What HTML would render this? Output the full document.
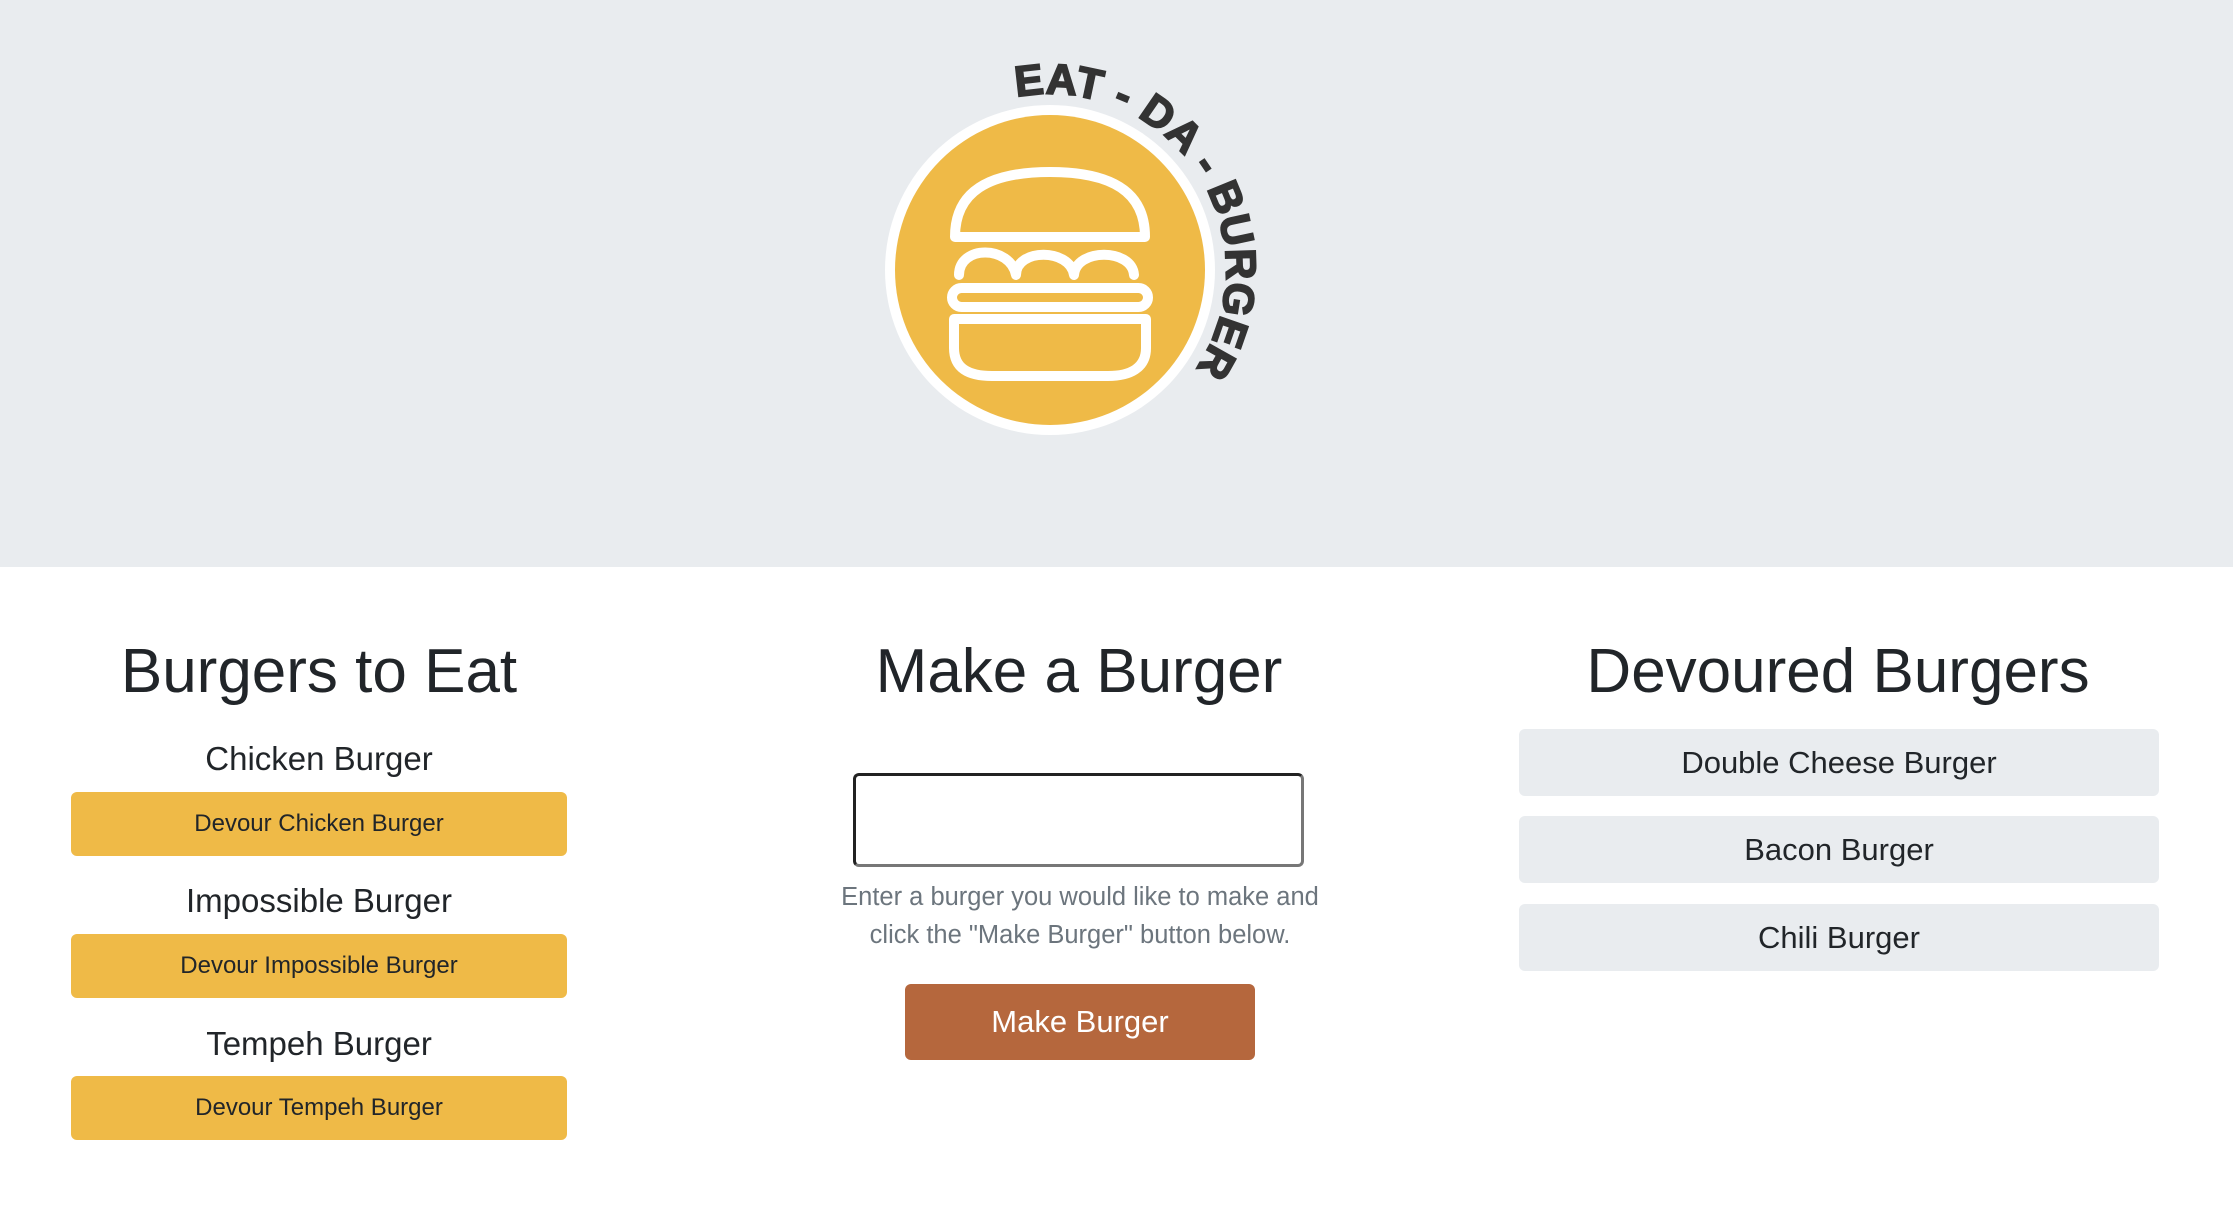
<!DOCTYPE html>
<html><head><meta charset="utf-8"><style>
*{margin:0;padding:0;box-sizing:border-box}
body{width:2233px;height:1222px;background:#fff;font-family:"Liberation Sans",sans-serif;color:#212529;position:relative;overflow:hidden}
.hdr{position:absolute;left:0;top:0;width:2233px;height:567px;background:#e9ecef}
.a{position:absolute;text-align:center}
h1{position:absolute;font-weight:400;font-size:62px;text-align:center;width:700px;line-height:1}
.nm{font-size:33px;width:496px;left:71px;line-height:1}
.yb{position:absolute;left:71px;width:496px;height:64px;background:#efba47;border-radius:6px;font-size:24px;line-height:64px;text-align:center}
.gb{position:absolute;left:1519px;width:640px;height:67px;background:#e9ecef;border-radius:6px;font-size:31px;line-height:67px;text-align:center}
</style></head><body>
<div class="hdr"></div>
<svg style="position:absolute;left:850px;top:60px" width="420" height="420" viewBox="0 0 420 420">
<defs><path id="arc" d="M166.4,37.2 A176,176 0 0 1 340.6,315.9"/></defs>
<circle cx="200" cy="210" r="165" fill="#fff"/>
<circle cx="200" cy="210" r="155" fill="#efba47"/>
<g fill="none" stroke="#fff" stroke-width="10" stroke-linecap="round" stroke-linejoin="round">
<path d="M105,177 L295,177 C295,132 262,112 200,112 C138,112 105,132 105,177 Z"/>
<path d="M109,215 C109,185 160,185 166,215 C166,188 220,188 224,215 C226,188 282,188 284,215"/>
<rect x="102" y="228" width="196" height="19" rx="9.5"/>
<path d="M104,259 L296,259 L296,288 C296,308 280,316 258,316 L142,316 C118,316 104,308 104,288 Z"/>
</g>
<text font-family="Liberation Sans,sans-serif" font-weight="bold" font-size="43" fill="#333" stroke="#333" stroke-width="1.8"><textPath href="#arc" textLength="415" lengthAdjust="spacing">EAT - DA - BURGER</textPath></text>
</svg>

<h1 style="left:-31px;top:641px">Burgers to Eat</h1>
<h1 style="left:729px;top:641px">Make a Burger</h1>
<h1 style="left:1488px;top:641px">Devoured Burgers</h1>

<div class="a nm" style="top:742px">Chicken Burger</div>
<div class="yb" style="top:792px">Devour Chicken Burger</div>
<div class="a nm" style="top:884px">Impossible Burger</div>
<div class="yb" style="top:934px">Devour Impossible Burger</div>
<div class="a nm" style="top:1027px">Tempeh Burger</div>
<div class="yb" style="top:1076px">Devour Tempeh Burger</div>

<div style="position:absolute;left:853px;top:773px;width:451px;height:94px;border:3px solid #222;border-right-color:#777;border-bottom-color:#777;border-radius:6px"></div>
<div class="a" style="left:780px;width:600px;top:878px;font-size:25.5px;line-height:38px;color:#6c757d">Enter a burger you would like to make and<br>click the "Make Burger" button below.</div>
<div class="a" style="left:905px;top:984px;width:350px;height:76px;background:#b5673d;border-radius:6px;color:#fff;font-size:31px;line-height:76px">Make Burger</div>

<div class="gb" style="top:729px">Double Cheese Burger</div>
<div class="gb" style="top:816px">Bacon Burger</div>
<div class="gb" style="top:904px">Chili Burger</div>
</body></html>
